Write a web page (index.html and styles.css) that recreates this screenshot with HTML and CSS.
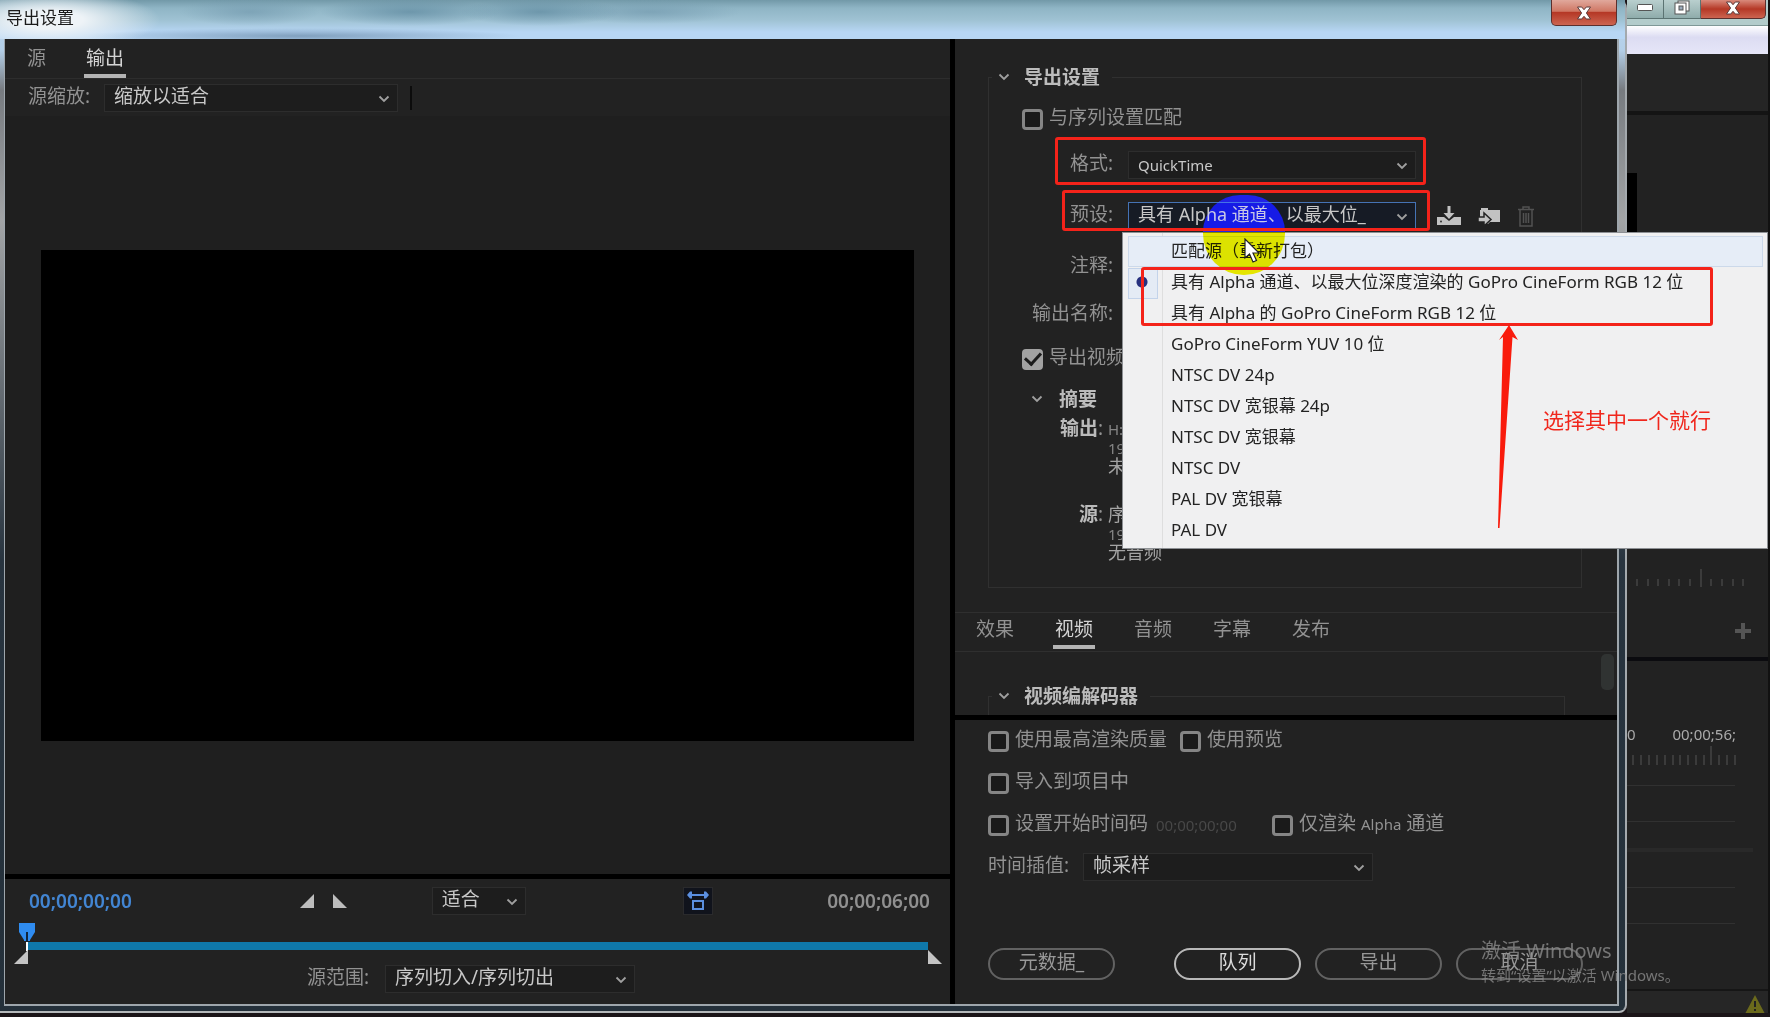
FILE: index.html
```html
<!DOCTYPE html>
<html lang="zh-CN">
<head>
<meta charset="utf-8">
<title>导出设置</title>
<link rel="stylesheet" href="styles.css">
</head>
<body>
<svg class="defs" aria-hidden="true">
  <symbol id="chevron" viewBox="0 0 12 8"><path d="M1.5 1.5 6 6l4.500-4.500" fill="none" stroke="currentColor" stroke-width="1.800"/></symbol>
  <symbol id="cross" viewBox="0 0 16 14"><path d="M1.500 1h4.200L8 3.700 10.300 1h4.200L10.400 7l4.100 6h-4.200L8 10.300 5.700 13H1.500l4.100-6z" fill="#fff" stroke="#5a3a3a" stroke-width="1"/></symbol>
</svg>

<main class="desktop">
  <section class="dialog" aria-label="导出设置">
    <header class="titlebar">
      <h1 class="titlebar-text">导出设置</h1>
      <button class="win-close" aria-label="关闭"><svg width="16" height="14"><use href="#cross"/></svg></button>
    </header>

    <div class="client">
      <div class="left">
        <section class="preview-pane">
          <nav class="top-tabs">
            <button class="tab">源</button>
            <button class="tab active">输出</button>
          </nav>
          <div class="scale-row">
            <label class="label" for="scale">源缩放:</label>
            <span class="select scale-select"><select id="scale"><option>缩放以适合</option></select><svg class="chev"><use href="#chevron"/></svg></span>
            <span class="separator"></span>
          </div>
          <div class="stage"><div class="video"></div></div>
        </section>
        <section class="transport">
          <div class="transport-row">
            <span class="timecode current">00;00;00;00</span>
            <div class="marks">
              <button class="icon-btn" aria-label="设置入点"><svg width="14" height="14"><path d="M14 0v14H0z" fill="#bdbdbd"/></svg></button>
              <button class="icon-btn" aria-label="设置出点"><svg width="14" height="14"><path d="M0 0v14h14z" fill="#bdbdbd"/></svg></button>
            </div>
            <span class="select fit-select"><select aria-label="缩放级别"><option>适合</option></select><svg class="chev"><use href="#chevron"/></svg></span>
            <button class="aspect-btn" aria-label="长宽比校正"><svg width="22" height="20" viewBox="0 0 22 20"><path d="M3 4h16" stroke="#5b8fe0" stroke-width="2"/><path d="M0 4l3-3.500h2v7H3zM22 4l-3-3.500h-2v7h2z" fill="#5b8fe0"/><rect x="6" y="10" width="10" height="8" fill="none" stroke="#5b8fe0" stroke-width="2"/></svg></button>
            <span class="timecode total">00;00;06;00</span>
          </div>
          <div class="scrubber">
            <div class="track"></div>
            <svg class="playhead" width="16" height="28"><path d="M0 0h16v9l-5 8v1H5v-1L0 9z" fill="#2f8cf0"/><path d="M8 9v10" stroke="#10253c" stroke-width="2"/><path d="M8 19v9" stroke="#fff" stroke-width="2"/></svg>
            <svg class="in-mark" width="14" height="14"><path d="M14 0v14H0z" fill="#c4c4c4"/></svg>
            <svg class="out-mark" width="14" height="14"><path d="M0 0v14h14z" fill="#c4c4c4"/></svg>
          </div>
          <div class="range-row">
            <label class="label" for="range">源范围:</label>
            <span class="select range-select"><select id="range"><option>序列切入/序列切出</option></select><svg class="chev"><use href="#chevron"/></svg></span>
          </div>
        </section>
      </div>

      <div class="right">
        <section class="settings">
          <fieldset class="group">
            <legend><svg class="chev-h"><use href="#chevron"/></svg>导出设置</legend>
            <div class="check-row match-row"><label class="check"><input type="checkbox"><span>与序列设置匹配</span></label></div>
            <div class="form-row">
              <label class="label" for="format">格式:</label>
              <div class="field"><span class="select form-select latin"><select id="format"><option>QuickTime</option></select><svg class="chev"><use href="#chevron"/></svg></span></div>
              <span class="callout callout-format"></span>
            </div>
            <div class="form-row preset-row">
              <label class="label" for="preset">预设:</label>
              <div class="field">
                <span class="select form-select focused"><select id="preset"><option>具有 Alpha 通道、以最大位_</option></select><svg class="chev"><use href="#chevron"/></svg></span>
                <div class="preset-tools">
                  <button class="icon-btn" aria-label="保存预设"><svg width="24" height="20"><path d="M0 11h7l5 4 5-4h7v8H0z" fill="#c2c2c2"/><path d="M10.500 0h3v7h4L12 13 6.500 7h4z" fill="#c2c2c2"/><circle cx="4" cy="15.500" r="1" fill="#333"/></svg></button>
                  <button class="icon-btn" aria-label="导入预设"><svg width="23" height="20"><path d="M2 4h1V2h7v2h12v12H12l-2 2H9v-4H2z" fill="#c2c2c2"/><path d="M0 11h6V7l7 6.500L6 20v-4H0z" fill="#c2c2c2" stroke="#232323" stroke-width="1.500"/></svg></button>
                  <button class="icon-btn" aria-label="删除预设" disabled><svg width="16" height="21"><path d="M0 3.500h16M5 3V1h6v2M2 4v16h12V4M5.500 7v10M8 7v10M10.500 7v10" fill="none" stroke="#525252" stroke-width="1.500"/></svg></button>
                </div>
                <ul class="menu" role="listbox" aria-label="预设">
                  <li class="hover" role="option">匹配源（重新打包）</li>
                  <li class="chosen" role="option" aria-selected="true">具有 Alpha 通道、以最大位深度渲染的 GoPro CineForm RGB 12 位</li>
                  <li role="option">具有 Alpha 的 GoPro CineForm RGB 12 位</li>
                  <li role="option">GoPro CineForm YUV 10 位</li>
                  <li role="option">NTSC DV 24p</li>
                  <li role="option">NTSC DV 宽银幕 24p</li>
                  <li role="option">NTSC DV 宽银幕</li>
                  <li role="option">NTSC DV</li>
                  <li role="option">PAL DV 宽银幕</li>
                  <li role="option">PAL DV</li>
                </ul>
                <span class="halo halo-top"></span>
                <span class="halo halo-bottom"></span>
                <span class="callout callout-options"></span>
                <svg class="arrow" width="20" height="204"><path d="M11 0 20 15 14.500 12 1.500 203H0L5 12 1 15z" fill="#f91b0c"/></svg>
                <p class="note">选择其中一个就行</p>
                <svg class="cursor" width="17" height="26"><path d="M1 1v19l4.500-4 3.500 8 3.500-1.500L9 15h6z" fill="#fff" stroke="#222" stroke-width="1.200"/></svg>
              </div>
              <span class="callout callout-preset"></span>
            </div>
            <div class="form-row"><span class="label">注释:</span></div>
            <div class="form-row"><span class="label">输出名称:</span></div>
            <div class="check-row"><label class="check"><input type="checkbox" checked><span>导出视频</span></label></div>
            <h2 class="summary-title"><svg class="chev-h"><use href="#chevron"/></svg>摘要</h2>
            <dl class="summary">
              <dt><b>输出</b>:</dt><dd><span class="num">H:</span><br><span class="num">19</span><br>未</dd>
              <dt><b>源</b>:</dt><dd>序<br><span class="num">19</span><br>无音频</dd>
            </dl>
          </fieldset>
        </section>
        <nav class="sub-tabs">
          <button class="tab">效果</button>
          <button class="tab active">视频</button>
          <button class="tab">音频</button>
          <button class="tab">字幕</button>
          <button class="tab">发布</button>
        </nav>
        <section class="codec">
          <fieldset class="group"><legend><svg class="chev-h"><use href="#chevron"/></svg>视频编解码器</legend></fieldset>
          <span class="scroll-thumb"></span>
        </section>
        <section class="options">
          <div class="option-row">
            <label class="check"><input type="checkbox"><span>使用最高渲染质量</span></label>
            <label class="check"><input type="checkbox"><span>使用预览</span></label>
          </div>
          <div class="option-row"><label class="check"><input type="checkbox"><span>导入到项目中</span></label></div>
          <div class="option-row">
            <label class="check"><input type="checkbox"><span>设置开始时间码</span></label>
            <input class="start-tc" value="00;00;00;00" aria-label="开始时间码" disabled>
            <label class="check"><input type="checkbox"><span>仅渲染 <span class="num">Alpha</span> 通道</span></label>
          </div>
          <div class="option-row">
            <label class="label" for="interp">时间插值:</label>
            <span class="select interp-select"><select id="interp"><option>帧采样</option></select><svg class="chev"><use href="#chevron"/></svg></span>
          </div>
          <footer class="actions">
            <button class="pill meta">元数据_</button>
            <button class="pill primary">队列</button>
            <button class="pill">导出</button>
            <button class="pill">取消</button>
          </footer>
        </section>
      </div>
    </div>
  </section>

  <aside class="backdrop">
    <div class="app-buttons">
      <button class="app-btn" aria-label="最小化"><svg width="16" height="7"><rect x=".5" y=".5" width="15" height="6" rx="1" fill="#fff" stroke="#555"/></svg></button>
      <button class="app-btn" aria-label="还原"><svg width="16" height="15"><rect x="4" y="1" width="11" height="10" fill="#fff" stroke="#555"/><rect x="1" y="3" width="11" height="11" fill="#fff" stroke="#555"/><rect x="5" y="6" width="4" height="4" fill="#9ab" stroke="#555"/></svg></button>
      <button class="app-btn red" aria-label="关闭应用"><svg width="16" height="14"><use href="#cross"/></svg></button>
    </div>
    <div class="app-strip"></div>
    <div class="app-bar"></div>
    <div class="app-monitor">
      <div class="dark-slab"></div>
      <svg class="ticks" width="120" height="20"><path d="M10 11v7M21 11v7M31 11v7M42 11v7M52 11v7M63 11v7M74 1v18M84 11v7M95 11v7M106 11v7M116 11v7" stroke="#555"/></svg>
      <button class="plus" aria-label="按钮编辑器"><svg width="16" height="16"><path d="M8 0v16M0 8h16" stroke="#555" stroke-width="4"/></svg></button>
    </div>
    <div class="app-timeline">
      <div class="times"><span>0</span><span>00;00;56;</span></div>
      <svg class="ticks" width="120" height="20"><path d="M6 9v10M14 9v10M22 9v10M30 9v10M38 9v10M46 9v10M53 9v10M61 9v10M69 9v10M77 9v10M84 0v19M92 9v10M100 9v10M108 9v10" stroke="#555"/></svg>
      <div class="tracks"><i></i><i></i><i class="thick"></i><i></i><i></i></div>
    </div>
    <div class="app-status"><svg width="20" height="18"><path d="M10 0 19.500 18H.5z" fill="#6b6a1c"/><path d="M10 6v6M10 14v2" stroke="#222" stroke-width="2"/></svg></div>
  </aside>

  <div class="watermark"><p class="wm-title">激活 Windows</p><p class="wm-text">转到“设置”以激活 Windows。</p></div>
</main>
</body>
</html>
```
FILE: styles.css
```css
* { box-sizing: border-box; }
body {
  margin: 0;
  background: #1b1518;
  color: #999;
  font: 19px/24px "Noto Sans", "Noto Sans CJK SC", sans-serif;
}
button, input, select { font: inherit; color: inherit; }
button { background: none; border: 0; padding: 0; }
h1, h2, p, ul, dl, dd { margin: 0; padding: 0; font: inherit; }
svg { display: block; flex: none; }
.defs { position: absolute; width: 0; height: 0; }

.desktop { display: flex; min-height: 100vh; padding-bottom: 4px; overflow: hidden; position: relative; }

/* dialog frame */
.dialog {
  flex: 1;
  min-width: 0;
  display: flex;
  flex-direction: column;
  padding: 0 6px 5px 4px;
  border-right: 2px solid #a4a9ad;
  border-bottom: 2px solid #b4b8ba;
  border-radius: 0 8px 8px 0;
  background: linear-gradient(#bcd8f2 0, #b4cfe8 50px, #777b80 90px, #a2a4a6 220px, #28343f 560px, #24303a 100%);
}
.titlebar {
  display: flex;
  justify-content: space-between;
  align-items: flex-start;
  height: 39px;
  margin: 0 -6px 0 -4px;
  padding: 0 8px 0 6px;
  background:
    radial-gradient(ellipse 110px 30px at 50px 20px, #eef3f7 30%, transparent 100%),
    radial-gradient(ellipse 70px 14px at 250px 12px, #6f96ab99, transparent),
    radial-gradient(ellipse 90px 14px at 410px 12px, #54809799, transparent),
    radial-gradient(ellipse 80px 14px at 540px 12px, #54809799, transparent),
    radial-gradient(ellipse 90px 12px at 650px 12px, #6f96ab99, transparent),
    radial-gradient(ellipse 220px 8px at 300px 36px, #5c7c9a99, transparent),
    linear-gradient(#7299a8 0, #8fb5c5 8px, #9fc2d3 20px, #b7d6f4 32px, #b7d6f4 100%);
}
.titlebar-text { padding-top: 6px; font-size: 17px; color: #1b1b1b; }
.win-close {
  width: 66px;
  height: 26px;
  display: grid;
  place-items: center;
  border: 1px solid #5b2f2d;
  border-top: 0;
  border-radius: 0 0 5px 5px;
  background: linear-gradient(#e0a89c, #cf7764 45%, #b53826 50%, #cc6450);
}
.client {
  flex: 1;
  display: grid;
  grid-template-columns: minmax(0, 1fr) 662px;
  gap: 5px;
  background: #000;
  border: solid #9ea6ac;
  border-width: 0 2px 2px 1px;
}
.left, .right { display: flex; flex-direction: column; min-width: 0; }
.left { gap: 5px; }

/* preview */
.preview-pane { flex: 1; display: flex; flex-direction: column; background: #1f1f1f; }
.top-tabs { display: flex; align-items: stretch; gap: 36px; height: 40px; padding: 7px 20px 0; background: #222; border-bottom: 1px solid #2d2d2d; }
.tab { height: 24px; padding: 0 2px; color: #929292; }
.tab.active { height: 32px; padding-bottom: 4px; color: #d4d4d4; border-bottom: 4px solid #b4b4b4; }
.scale-row { display: flex; align-items: center; height: 37px; padding: 0 23px; background: #222; }
.label { padding-bottom: 4px; color: #929292; white-space: nowrap; }
.select { position: relative; display: block; border: 1px solid #2d2d2d; background: #1d1d1d; color: #c8c8c8; }
.select select {
  display: block;
  width: 100%;
  height: 26px;
  padding: 0 32px 4px 9px;
  border: 0;
  background: none;
  appearance: none;
  outline: 0;
  line-height: 22px;
}
.select option { color: #222; }
.chev { position: absolute; right: 7px; top: 10px; width: 12px; height: 8px; color: #a0a0a0; pointer-events: none; }
.scale-select { width: 294px; margin-left: 14px; }
.separator { width: 2px; height: 24px; margin-left: 12px; background: #0c0c0c; }
.stage { flex: 1; display: flex; padding: 134px 36px 133px; }
.video { flex: 1; background: #000; }

/* transport */
.transport { background: #222; padding: 8px 14px 11px 9px; }
.transport-row { display: flex; align-items: center; height: 28px; padding: 0 6px 0 15px; }
.timecode { font-weight: 600; white-space: nowrap; }
.current { color: #4285d2; }
.total { margin-left: auto; color: #909090; }
.marks { display: flex; gap: 19px; margin-left: 168px; }
.fit-select { width: 94px; margin-left: 85px; }
.aspect-btn { display: grid; place-items: center; width: 30px; height: 28px; margin-left: 157px; background: #10131c; border: 1px solid #2a2a2c; }
.scrubber { position: relative; height: 50px; padding-top: 27px; }
.track { height: 8px; margin: 0 8px 0 13px; background: #0f78aa; }
.playhead { position: absolute; left: 5px; top: 8px; }
.in-mark { position: absolute; left: 0; top: 35px; }
.out-mark { position: absolute; right: -6px; top: 35px; }
.range-row { display: flex; align-items: center; justify-content: flex-end; gap: 16px; padding-right: 301px; }
.range-select { width: 250px; }

/* export settings */
.settings { padding: 26px 35px 24px 33px; background: #222; }
.group { min-width: 0; margin: 0; padding: 0; border: 1px solid #303030; color: #929292; }
legend { display: flex; align-items: center; gap: 14px; margin-left: 3px; padding: 0 12px 0 6px; font-weight: 700; color: #bcbcbc; }
.chev-h { width: 12px; height: 8px; color: #a0a0a0; }
.check-row { display: flex; align-items: center; height: 40px; padding-left: 33px; }
.match-row { height: 52px; padding-top: 8px; }
.check { display: flex; align-items: center; gap: 6px; white-space: nowrap; }
.check > span { padding-bottom: 4px; }
.check input {
  appearance: none;
  width: 21px;
  height: 21px;
  margin: 0;
  border: 3px solid #858585;
  border-radius: 4px;
  background: #1a1a1a;
}
.check input:checked { background: #a2a2a2; border-color: #a2a2a2; display: grid; place-items: center; }
.check input:checked::after { content: ""; width: 13px; height: 7px; border: solid #1c1c1c; border-width: 0 0 3px 3px; transform: translateY(-2px) rotate(-48deg); }
.form-row { position: relative; display: grid; grid-template-columns: 124px 1fr; column-gap: 15px; align-items: center; height: 48px; }
.preset-row { height: 54px; }
.form-row .label { text-align: right; }
.field { position: relative; display: flex; align-items: center; }
.form-select { width: 288px; font-size: 18px; }
.latin { font-size: 15px; }
.latin select { padding-bottom: 0; }
.focused { border-color: #4573b5; background: #161b25; }
.preset-tools { display: flex; align-items: center; gap: 17px; margin-left: 21px; }

/* preset list */
.menu {
  position: absolute;
  z-index: 2;
  left: -6px;
  top: 30px;
  width: 646px;
  padding: 3px 4px 2px 5px;
  list-style: none;
  border: 1px solid #8d9094;
  background: linear-gradient(90deg, transparent 39px, #dedede 39px, #dedede 40px, transparent 40px) #f0f0f1;
  color: #232323;
  font-size: 17px;
}
.menu li { height: 31px; padding: 2px 0 0 43px; line-height: 26px; white-space: nowrap; }
.menu .hover { background: #e6edf7; box-shadow: inset 0 0 0 1px #ccd9ea; }
.menu .chosen { position: relative; }
.chosen::before {
  content: "";
  position: absolute;
  left: 0;
  top: 1px;
  width: 28px;
  height: 29px;
  border: 1px solid #c3d3ea;
  background: radial-gradient(circle at 13px 13px, #27307e 5px, transparent 6px) #e4ebf5;
}

/* annotations */
.callout { position: absolute; z-index: 4; border: 3px solid #f4231a; border-radius: 3px; pointer-events: none; }
.callout-format { left: 66px; top: -4px; width: 371px; height: 48px; }
.callout-preset { left: 73px; top: 1px; width: 368px; height: 41px; }
.callout-options { left: 13px; top: 65px; width: 572px; height: 59px; }
.arrow { position: absolute; z-index: 4; left: 370px; top: 123px; }
.note { position: absolute; z-index: 4; left: 415px; top: 206px; font-size: 21px; color: #f0261c; white-space: nowrap; }
.halo { position: absolute; z-index: 3; left: 75px; width: 82px; pointer-events: none; }
.halo-top { top: -7px; height: 37px; border-radius: 41px 41px 0 0; background: #1616e6; mix-blend-mode: lighten; }
.halo-bottom { top: 30px; height: 43px; border-radius: 0 0 41px 41px; background: #f4f400; mix-blend-mode: multiply; }
.cursor { position: absolute; z-index: 5; left: 116px; top: 36px; }

/* summary */
.summary-title { display: flex; align-items: center; gap: 16px; height: 40px; padding-left: 42px; font-weight: 700; color: #bcbcbc; }
.summary { display: grid; grid-template-columns: 114px 1fr; column-gap: 5px; row-gap: 29px; padding-bottom: 25px; line-height: 19px; }
.summary dt { text-align: right; }
.summary b { color: #bbb; }
.summary dd { font-size: 18px; color: #a5a5a5; }
.num { font-size: 15px; line-height: 18px; }
.summary .num { color: #858585; }

/* lower tabs */
.sub-tabs { display: flex; gap: 37px; height: 40px; padding: 4px 19px 0; background: #222; border: solid #2f2f2f; border-width: 1px 0; }
.codec { position: relative; height: 63px; padding: 32px 52px 0 33px; background: #222; overflow: hidden; }
.codec .group { height: 60px; }
.scroll-thumb { position: absolute; right: 3px; top: 2px; width: 13px; height: 36px; border-radius: 5px; background: #303332; }

/* options */
.options { flex: 1; display: flex; flex-direction: column; margin-top: 5px; padding: 0 34px 24px 33px; background: #222; color: #929292; }
.option-row { display: flex; align-items: center; height: 42px; gap: 13px; }
.option-row .select { margin-left: 1px; }
.start-tc { width: 82px; margin-left: -5px; margin-right: 21px; padding: 0; border: 0; background: none; color: #484848; font-size: 15px; }
.interp-select { width: 290px; }
.actions { display: flex; justify-content: flex-end; gap: 14px; margin-top: auto; }
.pill { width: 127px; height: 32px; padding-bottom: 4px; border: 2px solid #626262; border-radius: 16px; color: #989898; line-height: 24px; }
.meta { margin-right: auto; }
.primary { border-color: #b9b9b9; color: #dcdcdc; }

/* application behind the dialog */
.backdrop { width: 143px; flex: none; display: flex; flex-direction: column; background: #222; border-right: 2px solid #111; }
.app-buttons { display: flex; align-items: flex-start; height: 26px; background: #b3cccb; border-bottom: 1px solid #7f9897; }
.app-btn { display: grid; place-items: center; width: 37px; height: 19px; padding-bottom: 3px; border: solid #5b7372; border-width: 0 1px 1px 0; background: linear-gradient(#b9cfce, #8facab); }
.app-btn.red { width: 65px; border-color: #5b2f2d; border-radius: 0 0 5px 0; background: linear-gradient(#d98a7b, #b53826 50%, #cc6450); }
.app-strip { height: 28px; background: linear-gradient(#fff, #dcdcf2 40%, #e6e6f8); }
.app-bar { height: 61px; background: #252525; border-bottom: 4px solid #141414; }
.app-monitor { flex: 1; display: flex; flex-direction: column; padding-top: 58px; border-bottom: 4px solid #0b0b0f; }
.dark-slab { width: 10px; height: 312px; background: #000; }
.app-monitor .ticks { margin-top: auto; }
.plus { align-self: flex-end; margin: 35px 17px 18px 0; }
.app-timeline { height: 328px; padding-top: 61px; }
.times { display: flex; justify-content: space-between; padding-right: 32px; font-size: 15px; color: #aaa; }
.tracks { display: grid; padding-right: 33px; }
.tracks i { height: 36px; border-bottom: 1px solid #313131; }
.tracks i:first-child { height: 20px; }
.tracks .thick { height: 30px; margin-right: -18px; border-bottom: 4px solid #292929; }
.app-status { display: flex; justify-content: flex-end; height: 24px; padding: 4px 3px 0; border-top: 2px solid #161616; background: #262626; }

.watermark { position: absolute; z-index: 6; right: 91px; bottom: 30px; width: 198px; color: #8b8b8bcc; white-space: nowrap; pointer-events: none; }
.wm-title { font-size: 20px; line-height: 24px; }
.wm-text { font-size: 15px; line-height: 24px; }
```
